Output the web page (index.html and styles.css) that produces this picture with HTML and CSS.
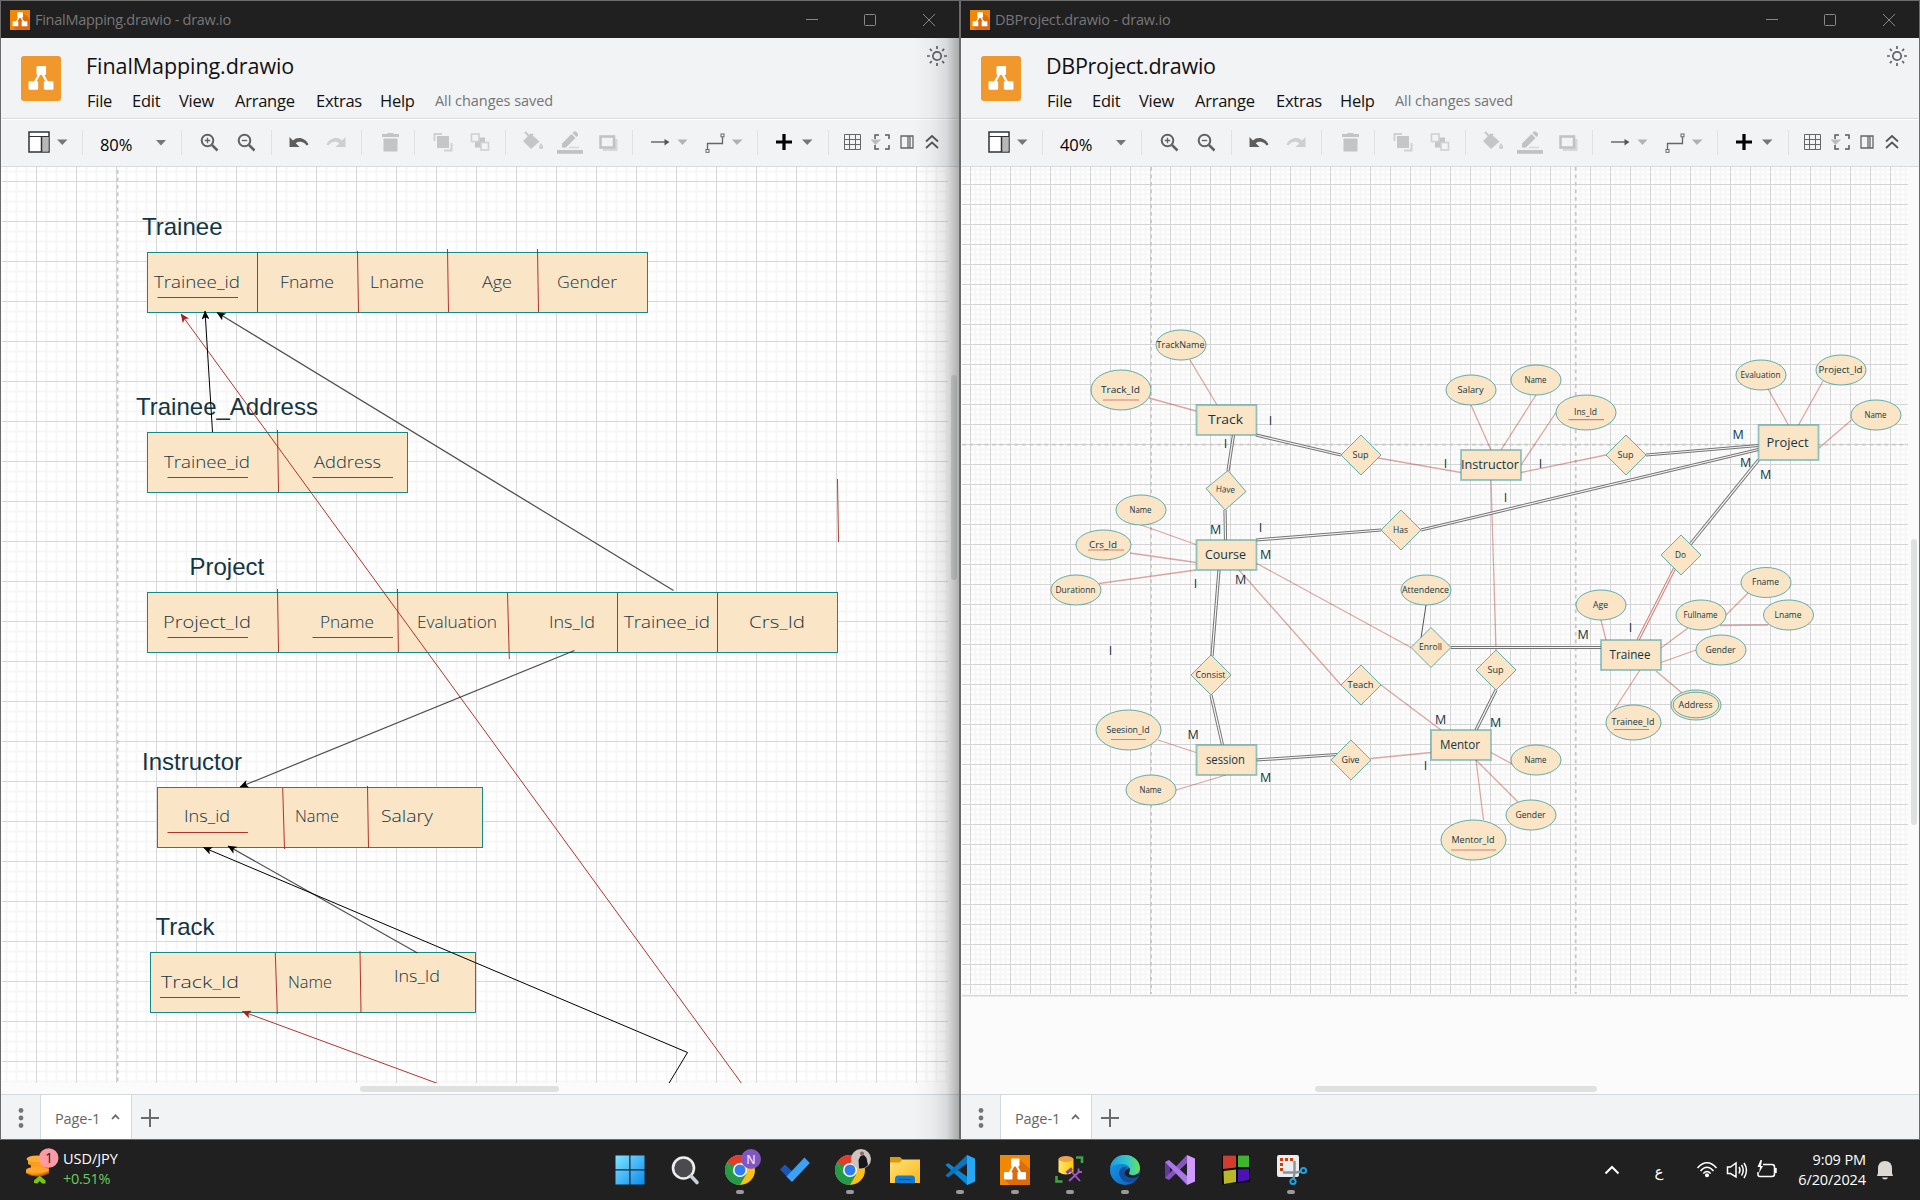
FILE: index.html
```html
<!DOCTYPE html>
<html lang="en">
<head>
<meta charset="utf-8">
<title>draw.io</title>
<link rel="stylesheet" href="styles.css">
</head>
<body>
<svg class="defs" width="0" height="0" aria-hidden="true">
  <defs>
    <linearGradient id="winblue" x1="0" y1="0" x2="1" y2="1"><stop offset="0" stop-color="#7fe3ff"/><stop offset="1" stop-color="#0a8cf0"/></linearGradient>
    <linearGradient id="folder" x1="0" y1="0" x2="1" y2="1"><stop offset="0" stop-color="#ffe07a"/><stop offset="1" stop-color="#fbb917"/></linearGradient>
    <linearGradient id="edgeA" x1="0" y1="0" x2="1" y2="0"><stop offset="0" stop-color="#1b9de2"/><stop offset=".6" stop-color="#35c9c9"/><stop offset="1" stop-color="#6fe04f"/></linearGradient>
    <linearGradient id="edgeB" x1="0" y1="0" x2="1" y2="1"><stop offset="0" stop-color="#1a9be8"/><stop offset="1" stop-color="#0a5fc0"/></linearGradient>
    <linearGradient id="coin" x1="0" y1="0" x2="1" y2="0"><stop offset="0" stop-color="#ffa526"/><stop offset="1" stop-color="#cf6a08"/></linearGradient>
    <linearGradient id="dbcyl" x1="0" y1="0" x2="1" y2="0"><stop offset="0" stop-color="#ffe56b"/><stop offset="1" stop-color="#ffc800"/></linearGradient>
    <pattern id="grid80" x="36" y="181" width="40" height="40" patternUnits="userSpaceOnUse">
      <path d="M10.5 0V40M20.5 0V40M30.5 0V40M0 10.5H40M0 20.5H40M0 30.5H40" stroke="#d0d0d0" stroke-opacity=".18" stroke-width="2"/>
      <path d="M.5 0V40M0 .5H40" stroke="#d8d8d8"/>
    </pattern>
    <pattern id="grid40" x="1050" y="304" width="20" height="20" patternUnits="userSpaceOnUse">
      <path d="M5.5 0V20M10.5 0V20M15.5 0V20M0 5.5H20M0 10.5H20M0 15.5H20" stroke="#d0d0d0" stroke-opacity=".2" stroke-width="2"/>
      <path d="M.5 0V20M0 .5H20" stroke="#d4d4d4"/>
    </pattern>
    <symbol id="caret" viewBox="0 0 10 6"><path d="M0 0H10L5 5.5Z" fill="currentColor"/></symbol>
    <symbol id="nodes" viewBox="0 0 30 30">
      <path d="M15 8L8 21M15 8L22 21" stroke="#fff" stroke-width="2" fill="none"/>
      <rect x="11" y="3.5" width="8.500" height="8" rx="1" fill="#fff"/><rect x="4" y="17" width="8.500" height="7.500" rx="1" fill="#fff"/><rect x="17.500" y="17" width="8.500" height="7.500" rx="1" fill="#fff"/>
    </symbol>
    <symbol id="appicon" viewBox="0 0 30 30"><path d="M0 0H30V30H0Z" fill="#f08705"/><path d="M19 4L30 14V30H10L4 24.500Z" fill="#df6c0c"/><use href="#nodes" width="30" height="30"/></symbol>
    <symbol id="g1" viewBox="2 120 81 46">
      <rect x="29" y="132" width="20" height="20" fill="#fff" stroke="#333" stroke-width="1.500"/><path d="M29 136.500H49" stroke="#333"/><rect x="41.500" y="137" width="7" height="14.500" fill="#b8b8b8"/><path d="M41.500 137V152" stroke="#333" stroke-width="1.500"/>
      <path d="M57 139.500H67.500L62.300 145Z" fill="#777"/>
    </symbol>
    <symbol id="g3" viewBox="183 120 89 46" fill="none" stroke="#626262" stroke-width="2">
      <circle cx="207.500" cy="140.500" r="5.800"/><path d="M212 145L217.500 150.500" stroke-width="2.500"/><path d="M204.800 140.500H210.200M207.500 137.800V143.200" stroke-width="1.300"/>
      <circle cx="244.500" cy="140.500" r="5.800"/><path d="M249 145L254.500 150.500" stroke-width="2.500"/><path d="M241.800 140.500H247.200" stroke-width="1.300"/>
    </symbol>
    <symbol id="g4" viewBox="273 120 89 46">
      <path d="M289.500 137V147H299.500L295.800 143.200C299 140.800 304 141.500 306.500 145.500L308.500 144.500C305.500 137.500 297.500 136 293 140.400Z" fill="#5e5e5e"/>
      <path d="M345.500 137V147H335.500L339.200 143.200C336 140.800 331 141.500 328.500 145.500L326.500 144.500C329.500 137.500 337.500 136 342 140.400Z" fill="#cdcfd1"/>
    </symbol>
    <symbol id="g5" viewBox="363 120 52 46"><path d="M382 134H387L388 133H393L394 134H399V137H382ZM383.500 138.500H397.500V151.500H383.500Z" fill="#c2c4c6"/></symbol>
    <symbol id="g6" viewBox="416 120 90 46">
      <path d="M437 136H449V148H437Z" fill="#c4c6c8"/><path d="M442 134H434.500V141M444 150.500H451.500V143" fill="none" stroke="#cfd1d3" stroke-width="2"/>
      <path d="M475 137.500H485V147.500H475Z" fill="#c4c6c8"/><rect x="471.500" y="134" width="7.500" height="7.500" fill="#f1f3f4" stroke="#cfd1d3" stroke-width="1.600"/><rect x="481" y="142.500" width="7.500" height="7.500" fill="#f1f3f4" stroke="#cfd1d3" stroke-width="1.600"/>
    </symbol>
    <symbol id="g7" viewBox="507 120 126 46">
      <path d="M530.500 133.500L539.500 141.500L531 149L523 141Z" fill="#c4c6c8"/><path d="M525 132L532 139M527 139L533 134" stroke="#c4c6c8" stroke-width="1.800"/><path d="M541 143Q544.500 147 542.500 148.800Q541 149.500 539.500 148.500Q538 147 541 143Z" fill="#cfd1d3"/>
      <path d="M562 143.500L571.500 134L575.500 138L566 147.500H562ZM572.500 133Q574.500 130 577 132.500Q579.500 135 576.500 137Z" fill="#c0c2c4"/><path d="M569 147.500H579" stroke="#d6d8da" stroke-width="1.500"/><path d="M557 150H583V153.800H557Z" fill="#c0c2c4"/>
      <path d="M603 139H617.500V151H603Z" fill="#d6d8da"/><rect x="600.500" y="136.500" width="13.500" height="11" fill="#f1f3f4" stroke="#c0c2c4" stroke-width="2.500"/>
    </symbol>
    <symbol id="g8" viewBox="634 120 124 46">
      <path d="M651 142H667" stroke="#6a6a6a" stroke-width="1.500"/><path d="M664.500 139L669.500 142L664.500 145.500Z" fill="#555"/><path d="M677.500 139.500H687.500L682.500 145Z" fill="#b0b2b4"/>
      <path d="M707.500 149V143.500H722.500V137" fill="none" stroke="#666" stroke-width="1.300"/><rect x="706" y="149.500" width="3" height="2.800" fill="#fff" stroke="#666"/><rect x="721" y="134" width="3" height="2.800" fill="#fff" stroke="#666"/><path d="M732 139.500H742.500L737 145Z" fill="#b0b2b4"/>
    </symbol>
    <symbol id="g9" viewBox="759 120 70 46"><path d="M784 134V150M776 142H792" stroke="#000" stroke-width="3.200"/><path d="M802 139.500H812.500L807.200 145Z" fill="#777"/></symbol>
    <symbol id="g10" viewBox="830 120 118 46">
      <path d="M844.500 134.500H860.500V149.500H844.500ZM849.500 134.500V149.500M855.500 134.500V149.500M844.500 139.500H860.500M844.500 144.500H860.500" fill="none" stroke="#666"/>
      <path d="M870.500 139.500H881L875.500 145Z" fill="#b9bbbd"/><path d="M875 139V135H879M885 135H889V139M889 145V149H885M879 149H875V145" fill="none" stroke="#5a5a5a" stroke-width="1.500"/>
      <path d="M901 136H913V148H901ZM908 136V148M910 136V148" fill="none" stroke="#666" stroke-width="1.300"/>
      <path d="M926 141.500L932 136L938 141.500M926 148L932 142.500L938 148" fill="none" stroke="#555" stroke-width="1.700"/>
    </symbol>
    <symbol id="sun" viewBox="0 0 22 22"><g fill="none" stroke="#5f6368" stroke-width="1.700"><circle cx="11" cy="11" r="4.200"/><path d="M11 1V4M11 18V21M1 11H4M18 11H21M3.900 3.900L5.800 5.800M16.200 16.200L18.100 18.100M3.900 18.100L5.800 16.200M16.200 5.800L18.100 3.900"/></g></symbol>
    <symbol id="wincontrols" viewBox="0 0 132 14"><path d="M1 6.500H13" stroke="#888"/><rect x="59.500" y="1.500" width="11" height="11" rx="1" fill="none" stroke="#888"/><path d="M118 1L130 13M130 1L118 13" stroke="#888"/></symbol>
    <symbol id="dots" viewBox="0 0 6 20"><circle cx="3" cy="2.500" r="2.400"/><circle cx="3" cy="10" r="2.400"/><circle cx="3" cy="17.500" r="2.400"/></symbol>
    <symbol id="chev" viewBox="0 0 9 6"><path d="M1 5L4.500 1.300L8 5" fill="none" stroke="currentColor" stroke-width="1.700"/></symbol>
    <symbol id="plus" viewBox="0 0 18 18"><path d="M9 0V18M0 9H18" stroke="#6b6b6b" stroke-width="2"/></symbol>
    <symbol id="chrome" viewBox="0 0 30 30">
      <circle cx="15" cy="15" r="15" fill="#fbc116"/><path d="M15 15L2 7.500A15 15 0 0 1 28 7.500H15Z" fill="#e33b2e"/><path d="M2 7.500A15 15 0 0 0 15 30L21.500 18.700L15 15L8.500 18.700Z" fill="#229a48"/><path d="M2 7.500L8.500 18.700L13 12Z" fill="#229a48"/><circle cx="15" cy="15" r="7" fill="#fff"/><circle cx="15" cy="15" r="5.500" fill="#2f7df0"/>
    </symbol>
    <marker id="headBlack" viewBox="0 0 9 8" refX="8.500" refY="4" markerWidth="9" markerHeight="8" markerUnits="userSpaceOnUse" orient="auto"><path d="M9 4L0 8L2.200 4L0 0Z" fill="#000"/></marker>
    <marker id="headRed" viewBox="0 0 9 8" refX="8.500" refY="4" markerWidth="9" markerHeight="8" markerUnits="userSpaceOnUse" orient="auto"><path d="M9 4L0 8L2.200 4L0 0Z" fill="#a8201a"/></marker>
  </defs>
</svg>

<div class="desktop">
  <section class="window window-left">
    <div class="titlebar"><svg class="tb-icon"><use href="#appicon"/></svg><span class="tb-text">FinalMapping.drawio - draw.io</span><svg class="controls"><use href="#wincontrols"/></svg></div>
    <header class="header">
      <div class="logo"><svg><use href="#nodes"/></svg></div>
      <div class="head-main">
        <h1 class="doc doc-left">FinalMapping.drawio</h1>
        <nav class="menu"><span>File</span><span>Edit</span><span>View</span><span>Arrange</span><span>Extras</span><span>Help</span><span class="saved">All changes saved</span></nav>
      </div>
      <svg class="sun"><use href="#sun"/></svg>
    </header>
    <div class="toolbar">
      <svg class="w1"><use href="#g1"/></svg>
      <div class="zoombox"><span>80%</span><svg><use href="#caret"/></svg></div>
      <svg class="w3"><use href="#g3"/></svg><svg class="w3"><use href="#g4"/></svg><svg class="w5"><use href="#g5"/></svg><svg class="w6"><use href="#g6"/></svg><svg class="w7"><use href="#g7"/></svg><svg class="w8"><use href="#g8"/></svg><svg class="w9"><use href="#g9"/></svg><svg class="w10"><use href="#g10"/></svg>
    </div>
    <div class="canvas">
      <svg id="mapping" class="sheet" viewBox="2 167 946 916"></svg>
      <div class="vtrack"><i class="vthumb v-left"></i></div>
      <div class="htrack"><i class="hthumb h-left"></i></div>
    </div>
    <footer class="pages">
      <div class="more"><svg><use href="#dots"/></svg></div>
      <div class="tab"><span>Page-1</span><svg><use href="#chev"/></svg></div>
      <svg class="add"><use href="#plus"/></svg>
    </footer>
    <div class="edge-shadow"></div>
  </section>

  <section class="window window-right">
    <div class="titlebar"><svg class="tb-icon"><use href="#appicon"/></svg><span class="tb-text tb-right">DBProject.drawio - draw.io</span><svg class="controls"><use href="#wincontrols"/></svg></div>
    <header class="header">
      <div class="logo"><svg><use href="#nodes"/></svg></div>
      <div class="head-main">
        <h1 class="doc doc-right">DBProject.drawio</h1>
        <nav class="menu"><span>File</span><span>Edit</span><span>View</span><span>Arrange</span><span>Extras</span><span>Help</span><span class="saved">All changes saved</span></nav>
      </div>
      <svg class="sun"><use href="#sun"/></svg>
    </header>
    <div class="toolbar">
      <svg class="w1"><use href="#g1"/></svg>
      <div class="zoombox"><span>40%</span><svg><use href="#caret"/></svg></div>
      <svg class="w3"><use href="#g3"/></svg><svg class="w3"><use href="#g4"/></svg><svg class="w5"><use href="#g5"/></svg><svg class="w6"><use href="#g6"/></svg><svg class="w7"><use href="#g7"/></svg><svg class="w8"><use href="#g8"/></svg><svg class="w9"><use href="#g9"/></svg><svg class="w10"><use href="#g10"/></svg>
    </div>
    <div class="canvas">
      <svg id="erd" class="sheet" viewBox="962 167 946 916"></svg>
      <div class="vtrack"><i class="vthumb v-right"></i></div>
      <div class="htrack"><i class="hthumb h-right"></i></div>
    </div>
    <footer class="pages">
      <div class="more"><svg><use href="#dots"/></svg></div>
      <div class="tab"><span>Page-1</span><svg><use href="#chev"/></svg></div>
      <svg class="add"><use href="#plus"/></svg>
    </footer>
  </section>
</div>

<div class="taskbar">
  <div class="widget">
    <svg width="38" height="44" viewBox="22 1148 38 44">
      <path d="M28 1159V1164Q36 1169 47 1164V1159Z" fill="url(#coin)"/><ellipse cx="37" cy="1159" rx="10.500" ry="3.500" fill="#ffab35"/>
      <path d="M31 1165V1170Q40 1174 49 1169V1164Z" fill="url(#coin)"/><ellipse cx="40" cy="1165" rx="9" ry="3" fill="#ff9d20"/>
      <path d="M26 1170V1173Q36 1179 49 1173V1169Z" fill="url(#coin)"/><ellipse cx="37.500" cy="1170" rx="11.500" ry="3.300" fill="#ffa52c"/><path d="M26 1173Q37 1179 49 1173" fill="none" stroke="#b85c06"/>
      <path d="M34 1183V1180.500L39.700 1175.500L45.500 1180.500V1183.500H42L39.700 1181L37.500 1183.500Z" fill="#7ac41c"/>
      <circle cx="48.700" cy="1158" r="9.800" fill="#ff99a4"/><text x="49" y="1163" text-anchor="middle" class="badge">1</text>
    </svg>
    <div class="rate"><span>USD/JPY</span><span class="up">+0.51%</span></div>
  </div>
  <div class="apps">
    <div class="app"><svg viewBox="0 0 30 30"><path d="M.5 .5H14.300V14.300H.5ZM15.500 .5H29.500V14.300H15.500ZM.5 15.500H14.300V29.500H.5ZM15.500 15.500H29.500V29.500H15.500Z" fill="url(#winblue)"/></svg></div>
    <div class="app"><svg viewBox="0 0 30 30"><circle cx="13.500" cy="13" r="10.500" fill="#4b4b4d" stroke="#eee" stroke-width="2.600"/><path d="M21 21L27 27.500" stroke="#ccd0d4" stroke-width="3.600" stroke-linecap="round"/></svg></div>
    <div class="app run"><svg viewBox="0 0 30 30"><use href="#chrome" width="30" height="30"/><circle cx="26" cy="4" r="10" fill="#7e57c2"/><text x="26" y="8.500" text-anchor="middle" class="profile">N</text></svg></div>
    <div class="app"><svg viewBox="0 0 30 30"><path d="M0 14.500L5 9.500L15 19L10.500 25.500Z" fill="#1a55b8"/><path d="M24.500 2.500L29.800 8L12 27L6.500 21.500Z" fill="#3da0f2"/></svg></div>
    <div class="app run"><svg viewBox="0 0 30 30"><use href="#chrome" width="30" height="30"/><circle cx="26" cy="4" r="10" fill="#cfc3c0"/><path d="M24 13.500L23.500 5L25.500 1L29 0L31.500 3L33 10Q30 14 24 13.500Z" fill="#15161c"/><circle cx="27" cy="-1.500" r="2" fill="#8a6a60"/></svg></div>
    <div class="app"><svg viewBox="0 0 30 30"><path d="M0 2H10L12.500 4.500V10H0Z" fill="#dd9a08"/><path d="M0 7.500H9.500L12.500 4.500H30V28H0Z" fill="url(#folder)"/><path d="M5 28V24Q5 20.500 8 20.500H22Q25 20.500 25 24V28Z" fill="#0f7bd4"/><path d="M9 24.500H21" stroke="#0a4f95"/></svg></div>
    <div class="app run"><svg viewBox="0 0 30 30"><path d="M.5 10L3 8L29 26.500L22 30Z" fill="#0b86d6"/><path d="M.5 20.500L3 22.500L29 3.500L22 0Z" fill="#0a74c0"/><path d="M22 0L30 3.500V26.500L22 30Z" fill="#25a7f3"/></svg></div>
    <div class="app run"><svg viewBox="0 0 30 30"><use href="#appicon" width="30" height="30"/></svg></div>
    <div class="app run"><svg viewBox="0 0 30 30"><path d="M3.500 4V17Q11 22 18.500 17V4Z" fill="url(#dbcyl)"/><ellipse cx="11" cy="4" rx="7.500" ry="3" fill="#eda24b"/><path d="M21 2.500H27V8M1.500 21V26.500H7.500" fill="none" stroke="#43a047" stroke-width="2.600"/><path d="M15 15L25 26M14 26L25 16" stroke="#a457c9" stroke-width="1.800"/><path d="M11.500 18L17 13.500" stroke="#8442ab" stroke-width="3"/><path d="M23.500 13.500L23.500 17L27 17" fill="none" stroke="#a457c9" stroke-width="1.800"/></svg></div>
    <div class="app run"><svg viewBox="0 0 30 30"><circle cx="15" cy="15" r="15" fill="url(#edgeB)"/><path d="M.3 13C1 4 8 0 15 0C24 0 30 6.500 30 13C30 18 26 20.500 22 20C18.500 19.500 18 18.500 19.500 16.500C21 13 18 9 12.500 9C7 9 2 10.500 .3 13Z" fill="url(#edgeA)"/><path d="M10.500 14C7 19 11 27 19 27.500C23 27.800 26.500 25 28 22.500C29 21 28 21 27 21.500C21 24.500 15 21.500 14.500 17.500C14.300 15.500 15.500 14 17 12.500C14.500 11.500 12 12 10.500 14Z" fill="#114f9e"/><path d="M14.500 18C15 15 16 14.500 19.500 13C21 15.500 18 18 19.500 19.500C22 21.500 26 20 29 18.500L28.700 21C22 25 15 22 14.500 18Z" fill="#202021"/></svg></div>
    <div class="app"><svg viewBox="0 0 30 30"><path d="M0 7L5 11V19L0 23Z" fill="#62399b"/><path d="M0 23L4 25L22 8V0Z" fill="#8355bd"/><path d="M0 7L4 5L22 21V30Z" fill="#a878e6"/><path d="M22 0L30 3.500V26.500L22 30Z" fill="#cf9bff"/></svg></div>
    <div class="app"><svg viewBox="0 0 30 30"><path d="M1 0H29V27L1 29.500Z" fill="#09090a"/><path d="M2 .5H15V12.500L2 14Z" fill="#d23b2e"/><path d="M17 .5H28V12H17Z" fill="#3eb52c"/><path d="M2.500 16L15 14.500V27L3 29Z" fill="#b8b727"/><path d="M17 14.500L28 14V25L17 27Z" fill="#4c12b5"/></svg></div>
    <div class="app run"><svg viewBox="0 0 30 30"><rect x="1" y="0" width="22" height="22" rx="2" fill="#e9edf0"/><path d="M5.500 16V4.500H17" fill="none" stroke="#d83b01" stroke-width="3" stroke-dasharray="3 2"/><path d="M18.500 6V18L17.500 24M7 17.500H20L25 16.500" fill="none" stroke="#8b9299" stroke-width="2.400"/><circle cx="27.500" cy="15.500" r="2.600" fill="none" stroke="#1ba1e6" stroke-width="2"/><circle cx="17" cy="26.500" r="2.600" fill="none" stroke="#1ba1e6" stroke-width="2"/></svg></div>
  </div>
  <div class="tray">
    <svg width="16" height="10" viewBox="0 0 16 10"><path d="M1.500 8.500L8 2L14.500 8.500" fill="none" stroke="#fff" stroke-width="2"/></svg>
    <span class="lang">ع</span>
    <svg class="status" viewBox="1692 1158 88 24" fill="none" stroke="#fff" stroke-width="1.500">
      <path d="M1696.500 1168Q1706 1157.500 1715.500 1168M1699.500 1171Q1706 1163.500 1712.500 1171M1702.300 1173.500Q1706 1169.500 1709.700 1173.500"/><circle cx="1706" cy="1175.300" r="1.300" fill="#fff"/>
      <path d="M1726.500 1167H1729.500L1735 1163V1177L1729.500 1173.500H1726.500ZM1738 1167Q1740 1170 1738 1173.500M1740.500 1165Q1744 1170 1740.500 1175.500M1743 1163Q1748 1170 1743 1178"/>
      <path d="M1762 1164.500H1771Q1773.500 1164.500 1773.500 1167V1174Q1773.500 1176.500 1771 1176.500H1759Q1757 1176.500 1757 1174.500V1172"/><path d="M1774.500 1168V1173" stroke-width="2.500"/><path d="M1759.500 1160L1756.500 1167H1759L1758 1173L1762 1166H1760L1761 1160Z" fill="#fff" stroke="none"/>
    </svg>
    <div class="clock"><span>9:09 PM</span><span>6/20/2024</span></div>
    <svg class="bell" viewBox="0 0 18 20"><path d="M2 9Q2 1 9 1Q16 1 16 9V13L17 16H1L2 13Z" fill="#dcd8d5"/><path d="M6 17.500H12Q11.500 19.500 9 19.500Q6.500 19.500 6 17.500Z" fill="#dcd8d5"/></svg>
  </div>
</div>
<script src="script.js"></script>
</body>
</html>
```
FILE: styles.css
```css
* { box-sizing: border-box; }
body {
  margin: 0;
  width: 1920px;
  height: 1200px;
  overflow: hidden;
  display: flex;
  flex-direction: column;
  font-family: "Open Sans", "Noto Sans", sans-serif;
  background: #202021;
}
svg { display: block; flex: none; }
.defs { position: absolute; }
.desktop { display: flex; height: 1140px; }
.window {
  position: relative;
  width: 960px;
  height: 1140px;
  display: flex;
  flex-direction: column;
  border: 1px solid #6b6b6b;
  background: #f1f3f4;
}
.titlebar { height: 37px; background: #202020; display: flex; align-items: center; padding-left: 9px; }
.tb-icon { width: 20px; height: 20px; }
.tb-text { font-size: 14.500px; color: #777; margin-left: 5px; flex: 1; white-space: nowrap; line-height: 36px; letter-spacing: -.27px; }
.tb-right { letter-spacing: -.17px; }
.controls { width: 132px; height: 14px; margin-right: 22px; }
.header { height: 81px; display: flex; border-bottom: 1px solid #dadce0; padding-left: 20px; }
.logo { width: 40px; height: 45px; margin-top: 18px; border-radius: 3px; background: #f0982c; display: flex; align-items: center; justify-content: center; }
.logo svg { width: 36px; height: 34px; }
.head-main { margin-left: 26px; flex: 1; }
.doc { margin: 11px 0 0 -1px; font-size: 21.500px; font-weight: 400; line-height: 34px; height: 34px; color: #111; white-space: nowrap; }
.doc-left { letter-spacing: -.07px; }
.doc-right { letter-spacing: -.28px; }
.menu { display: grid; grid-template-columns: 45px 47px 56px 81px 64px 55px auto; font-size: 16.500px; line-height: 24px; margin-top: 6px; letter-spacing: -.25px; color: #111; white-space: nowrap; }
.menu .saved { font-size: 14.500px; color: #757575; letter-spacing: -.05px; }
.sun { width: 22px; height: 22px; margin: 7px 11px 0 0; }
.toolbar { height: 48px; border-top: 1px solid #fff; border-bottom: 1px solid #d8dade; display: flex; align-items: center; padding-left: 1px; }
.toolbar > * { height: 46px; }
.toolbar > * + * { margin-left: 1px; }
.toolbar > *:not(:last-child) {
  background: linear-gradient(#dfe1e3, #dfe1e3) no-repeat right 10px / 1px 25px;
}
.w1 { width: 81px; }
.w3 { width: 89px; }
.w5 { width: 52px; }
.w6 { width: 90px; }
.w7 { width: 126px; }
.w8 { width: 124px; }
.w9 { width: 70px; }
.w10 { width: 118px; }
.zoombox { width: 98px; display: flex; align-items: center; padding: 3px 16px 0 16px; font-size: 16.500px; color: #000; justify-content: space-between; letter-spacing: -.1px; }
.zoombox svg { width: 10px; height: 6px; color: #777; margin-top: -4px; }
.canvas { height: 927px; display: grid; grid-template: 916px 11px / 946px 1fr; padding-left: 1px; background: #fbfbfb; }
.sheet { width: 946px; height: 916px; }
.vtrack { padding-left: 2.500px; }
.vthumb, .hthumb { display: block; background: #dfe0e0; border-radius: 3px; }
.vthumb { width: 6px; }
.hthumb { height: 6px; margin-top: 3px; }
.v-left { height: 205px; margin-top: 208px; }
.v-right { height: 286px; margin-top: 372px; }
.h-left { width: 199px; margin-left: 358px; }
.h-right { width: 282px; margin-left: 353px; }
.htrack { grid-column: 1 / 3; }
.pages { flex: 1; border-top: 1px solid #d5d8dc; display: flex; align-items: center; }
.more { width: 39px; display: flex; justify-content: center; }
.more svg { width: 6px; height: 20px; fill: #757575; margin-top: 1px; }
.tab { align-self: stretch; width: 92px; background: #fff; border: solid #d5d8dc; border-width: 0 1px; display: flex; align-items: center; padding-left: 14px; gap: 9px; font-size: 14.500px; color: #666; letter-spacing: -.1px; }
.tab span { padding-top: 2px; width: 47px; }
.tab svg { width: 9px; height: 6px; }
.add { width: 18px; height: 18px; margin: 2px 0 0 9px; }
.edge-shadow { position: absolute; right: 0; top: 37px; bottom: 0; width: 46px; background: linear-gradient(90deg, rgba(0,0,0,0), rgba(0,0,0,.03) 40%, rgba(0,0,0,.1) 72%, rgba(0,0,0,.3)); }

.taskbar { height: 60px; background: #202021; color: #fff; display: grid; grid-template-columns: 602px 717px 1fr; align-items: stretch; }
.widget { display: flex; padding: 8px 0 0 22px; }
.rate { display: flex; flex-direction: column; margin-left: 3px; font-size: 14.500px; line-height: 20px; letter-spacing: -.05px; }
.rate span:first-child { margin-top: 1px; }
.up { color: #6ccb5f; letter-spacing: -.3px; }
.badge { font-size: 14px; fill: #222; }
.profile { font-size: 12px; font-weight: 600; fill: #e8dcf8; }
.apps { display: flex; }
.app { width: 55.100px; flex: none; display: flex; flex-direction: column; align-items: center; padding-top: 15px; }
.app svg { width: 30px; height: 30px; overflow: visible; }
.run::after { content: ""; width: 8px; height: 4px; border-radius: 2px; background: #9a9a9a; margin-top: 5px; }
.tray { display: flex; align-items: center; justify-content: flex-end; padding-right: 26px; }
.lang { font-family: "DejaVu Sans", sans-serif; font-size: 15px; width: 14px; text-align: center; margin: 4px 27px 0 32px; }
.status { width: 88px; height: 24px; }
.clock { width: 85px; display: flex; flex-direction: column; align-items: flex-end; font-size: 14.500px; line-height: 20px; letter-spacing: -.1px; }
.bell { width: 18px; height: 20px; margin-left: 10px; }

.title { font-family: "Liberation Sans", Arial, sans-serif; font-size: 24px; fill: #143642; }
.hand { font-family: "Open Sans", sans-serif; fill: #143642; text-anchor: middle; }
.field { font-size: 16px; font-weight: 350; }
.entity { font-size: 12.500px; }
.attr { font-size: 9px; }
.card { font-family: "Open Sans", sans-serif; font-size: 12.500px; fill: #143642; text-anchor: middle; }
.shape { fill: #fae5c7; stroke: #0f8b8d; }
.soft { stroke-opacity: .65; }
.rect-soft { stroke-opacity: .45; stroke-width: 1.800; }
.red { stroke: #a8201a; stroke-opacity: .9; fill: none; }
.rel { stroke: #a8201a; stroke-opacity: .38; stroke-width: 1.300; fill: none; }
.underline { stroke: #a8201a; stroke-opacity: .5; stroke-width: 1.200; }
.black { stroke: #000; fill: none; }
.gray { stroke: #222; stroke-opacity: .8; stroke-width: 1.200; fill: none; }
.thin { stroke: #555; stroke-width: 1; }
.dbl { stroke: #757575; stroke-width: 3.200; }
.dbl-red { stroke: #cf7f7a; stroke-width: 3.200; }
.dbl-in { stroke: #f6f6f6; stroke-width: 1.200; }
.break { stroke: #c8c8c8; stroke-width: 1.800; stroke-dasharray: 3.750 3.750; }
```
FILE: script.js
```js
// Small helpers that return SVG markup for the diagram primitives.
const rect = (x, y, w, h, c = '') => `<rect class="shape ${c}" x="${x}" y="${y}" width="${w}" height="${h}"/>`;
const line = (c, x1, y1, x2, y2, extra = '') => `<line class="${c}" x1="${x1}" y1="${y1}" x2="${x2}" y2="${y2}" ${extra}/>`;
const hand = (c, t, x, y, w) => `<text class="hand ${c}" x="${x}" y="${y}" textLength="${w}" lengthAdjust="spacingAndGlyphs">${t}</text>`;
const title = (t, x, y) => `<text class="title" x="${x}" y="${y}">${t}</text>`;

// Relational mapping
let out = '<rect x="2" y="167" width="946" height="916" fill="#fff"/><rect x="2" y="167" width="946" height="916" fill="url(#grid80)"/>';
out += line('break', 117.6, 170, 117.6, 1083);
[[147.5, 252.5, 500], [147.5, 432.5, 260], [147.5, 592.5, 690], [157.5, 787.5, 325], [150.5, 952.5, 325]]
  .forEach(([x, y, w]) => { out += rect(x, y, w, 60); });
[['Trainee', 142, 235], ['Trainee_Address', 136, 415], ['Project', 189.5, 575], ['Instructor', 142, 770], ['Track', 155.5, 935]]
  .forEach(a => { out += title(...a); });
[['Trainee_id', 154, 240, 288], ['Fname', 280, 334, 288], ['Lname', 370, 424, 288], ['Age', 482, 512, 288], ['Gender', 557, 617, 288],
 ['Trainee_id', 164, 250, 468], ['Address', 314, 381, 468],
 ['Project_Id', 163, 251, 628], ['Pname', 320, 374, 628], ['Evaluation', 417, 497, 628], ['Ins_Id', 549, 595, 628], ['Trainee_id', 624, 710, 628], ['Crs_Id', 749, 805, 628],
 ['Ins_id', 184, 230, 822], ['Name', 295, 339, 822], ['Salary', 381, 433, 822],
 ['Track_Id', 161, 239, 988], ['Name', 288, 332, 988], ['Ins_Id', 394, 440, 982]]
  .forEach(([t, a, b, y]) => { out += hand('field', t, (a + b) / 2, y, b - a); });
[[257.5, 252, 257.5, 312], [357.5, 251, 358.5, 313], [447.5, 249, 448.5, 312], [537.5, 249, 538.5, 312],
 [277.5, 430, 278.5, 492], [277.5, 589, 278.5, 652], [397.5, 589, 398.4, 652], [507.5, 593, 509.3, 659], [617.5, 593, 617.5, 652], [717.5, 593, 717.5, 652],
 [837.5, 479, 838.5, 542], [282.7, 788, 284.5, 849], [367.5, 786, 368.5, 848], [275.3, 953, 277.3, 1014], [360, 951, 361, 1013],
 [157.5, 297.5, 238, 297.5], [167.5, 477.5, 248, 477.5], [312.5, 477.5, 393, 477.5], [167.5, 637.5, 248, 637.5], [312.5, 637.5, 393, 637.5],
 [167.5, 832.5, 248, 832.5], [160, 997.5, 240, 997.5]]
  .forEach(a => { out += line('red', ...a); });
out += line('red', 742, 1084, 181, 314, 'marker-end="url(#headRed)"');
out += line('red', 439, 1084, 242.5, 1011.500, 'marker-end="url(#headRed)"');
out += line('black', 212.5, 432, 205, 311, 'marker-end="url(#headBlack)"');
out += line('gray', 673.5, 590.5, 217, 312.5, 'marker-end="url(#headBlack)"');
out += line('gray', 574.5, 650.5, 240, 787, 'marker-end="url(#headBlack)"');
out += line('gray', 417.5, 953, 228, 846, 'marker-end="url(#headBlack)"');
out += '<polyline class="black" points="668.500,1084 687.500,1052.500 203.500,847.500" marker-end="url(#headBlack)"/>';
document.getElementById('mapping').innerHTML = out;

// Entity relationship diagram
out = '<rect x="962" y="167" width="946" height="827" fill="#fff"/><rect x="962" y="167" width="946" height="827" fill="url(#grid40)"/>';
out += '<rect x="962" y="994" width="946" height="89" fill="#fbfbfb"/><path d="M962 995.500H1908" stroke="#d6d6d6"/><path d="M962 996.500H1908" stroke="#ebebeb"/>';
out += line('break', 1151, 167, 1151, 994) + line('break', 1575.700, 167, 1575.700, 994) + line('break', 962, 444.700, 1908, 444.700);
[[1190, 360, 1217, 405], [1149, 398, 1196, 411], [1378, 458, 1461, 472.5], [1141, 525, 1196, 544.5], [1130, 553, 1196, 562.5], [1099, 583.5, 1196, 570],
 [1256, 563, 1411, 647.5], [1239, 570, 1341, 685], [1381, 685, 1441, 730], [1371, 758.5, 1431, 752.5], [1158, 740, 1196, 752.5], [1176, 790, 1226, 775],
 [1471, 405, 1491, 450], [1536, 395, 1501, 450], [1556, 412.5, 1521, 465], [1521, 472.5, 1606, 455], [1491, 480, 1496, 650],
 [1768, 389, 1788.5, 425], [1823, 381, 1798.5, 425], [1851.5, 420, 1819, 448], [1601, 620, 1606, 640], [1688, 628, 1661, 648], [1748, 593, 1726, 615],
 [1720, 625.5, 1768, 625], [1696, 650, 1661, 662.5], [1682, 693, 1656, 671], [1614, 710, 1640, 670], [1514, 765, 1491, 752.5], [1518, 802, 1476, 760], [1483.5, 820, 1476, 760]]
  .forEach(a => { out += line('rel', ...a); });
[[1256, 435, 1341, 455], [1233.5, 435, 1228, 471], [1225, 510, 1225.5, 540], [1256, 540, 1381, 530], [1421, 530, 1758.5, 449.5], [1219, 570, 1212, 656],
 [1211, 695, 1222.5, 745], [1256, 760, 1337, 754.5], [1646, 455, 1758.5, 445.5], [1690.5, 544, 1758.5, 460], [1451, 647.5, 1601, 647.5], [1496, 690, 1476, 730]]
  .forEach(a => { out += line('dbl', ...a) + line('dbl-in', ...a); });
out += line('dbl-red', 1674.5, 568.5, 1638, 640) + line('dbl-in', 1674.5, 568.5, 1638, 640);
out += line('thin', 1426, 605, 1421, 638);

[['TrackName', 1181, 345, 25, 15, 48], ['Track_Id', 1121, 390, 30, 20, 39], ['Name', 1141, 510, 25, 15, 22], ['Crs_Id', 1103.5, 545, 27.5, 15, 28], ['Durationn', 1076, 590, 25, 15, 40],
 ['Attendence', 1426, 590, 25, 15, 47], ['Seesion_Id', 1128.5, 730, 32.5, 20, 43], ['Name', 1151, 790, 25, 15, 22], ['Salary', 1471, 390, 25, 15, 26], ['Name', 1536, 380, 25, 15, 22],
 ['Ins_Id', 1586, 412.5, 30, 17.5, 23], ['Evaluation', 1761, 375, 25, 15, 40], ['Project_Id', 1841, 370, 25, 15, 44], ['Name', 1876, 415, 25, 15, 22],
 ['Fname', 1766, 582.5, 25, 15, 27], ['Fullname', 1701, 615, 25, 15, 34], ['Lname', 1788.5, 615, 25, 15, 27], ['Age', 1601, 605, 25, 15, 15], ['Gender', 1721, 650, 25, 15, 30],
 ['Address', 1696, 705, 25, 15, 34], ['Trainee_Id', 1633.5, 722.5, 27.5, 17.5, 43], ['Name', 1536, 760, 25, 15, 22], ['Gender', 1531, 815, 25, 15, 30], ['Mentor_Id', 1473.5, 840, 32.5, 20, 43]]
  .forEach(([t, x, y, rx, ry, w]) => {
    out += `<ellipse class="shape soft" cx="${x}" cy="${y}" rx="${rx}" ry="${ry}"/>`;
    if (t === 'Address') out += `<ellipse class="shape soft" cx="${x}" cy="${y}" rx="${rx - 2.2}" ry="${ry - 2.2}"/>`;
    out += hand('attr', t, x - .5, y + 2.5, w);
  });
[[1103, 400, 1139], [1088, 550, 1124], [1111, 739.5, 1146], [1568.5, 419.7, 1604], [1614, 729.5, 1649], [1451, 850, 1496]]
  .forEach(([x, y, x2]) => { out += line('underline', x, y, x2, y); });
[['Track', 1196.5, 405, 30, 35], ['Course', 1196.5, 540, 30, 41], ['session', 1196.5, 745, 30, 39], ['Instructor', 1461, 450, 30, 58], ['Project', 1758.5, 425, 35, 42], ['Trainee', 1601, 640, 30, 41], ['Mentor', 1431, 730, 30, 40]]
  .forEach(([t, x, y, h, w]) => { out += rect(x, y, 60, h, 'rect-soft') + hand('entity', t, x + 29, y + h / 2 + 4, w); });
[['Sup', 1361, 455, 16], ['Has', 1401, 530, 15], ['Sup', 1626, 455, 16], ['Do', 1681, 555, 11], ['Consist', 1211, 675, 30], ['Enroll', 1431, 647.5, 23], ['Teach', 1361, 685, 26], ['Give', 1351, 760, 18], ['Sup', 1496, 670, 16]]
  .forEach(([t, x, y, w]) => { out += `<path class="shape soft" d="M${x} ${y - 20}l20 20l-20 20l-20 -20z"/>` + hand('attr', t, x - .5, y + 2.5, w); });
out += '<path class="shape soft" d="M1228 470.500L1246 491.500L1225 510L1206 488.500Z"/>' + `<g transform="rotate(4 1226 490)">${hand('attr', 'Have', 1225.5, 492.5, 19)}</g>`;
[['I', 1270.5, 425], ['I', 1225.5, 448], ['M', 1215.5, 534], ['I', 1260.5, 532], ['M', 1265.5, 559], ['I', 1195.5, 588], ['M', 1240.5, 583.5], ['I', 1110.5, 655],
 ['M', 1193, 739], ['M', 1265.5, 782], ['M', 1440.5, 724], ['I', 1425.5, 770], ['I', 1445.5, 468], ['I', 1540.5, 468], ['I', 1505.5, 502], ['M', 1738, 439],
 ['M', 1745.5, 467], ['M', 1765.5, 479], ['M', 1583, 639], ['I', 1630.5, 632], ['M', 1495.5, 727]]
  .forEach(([t, x, y]) => { out += `<text class="card" x="${x}" y="${y}">${t}</text>`; });
document.getElementById('erd').innerHTML = out;
```
